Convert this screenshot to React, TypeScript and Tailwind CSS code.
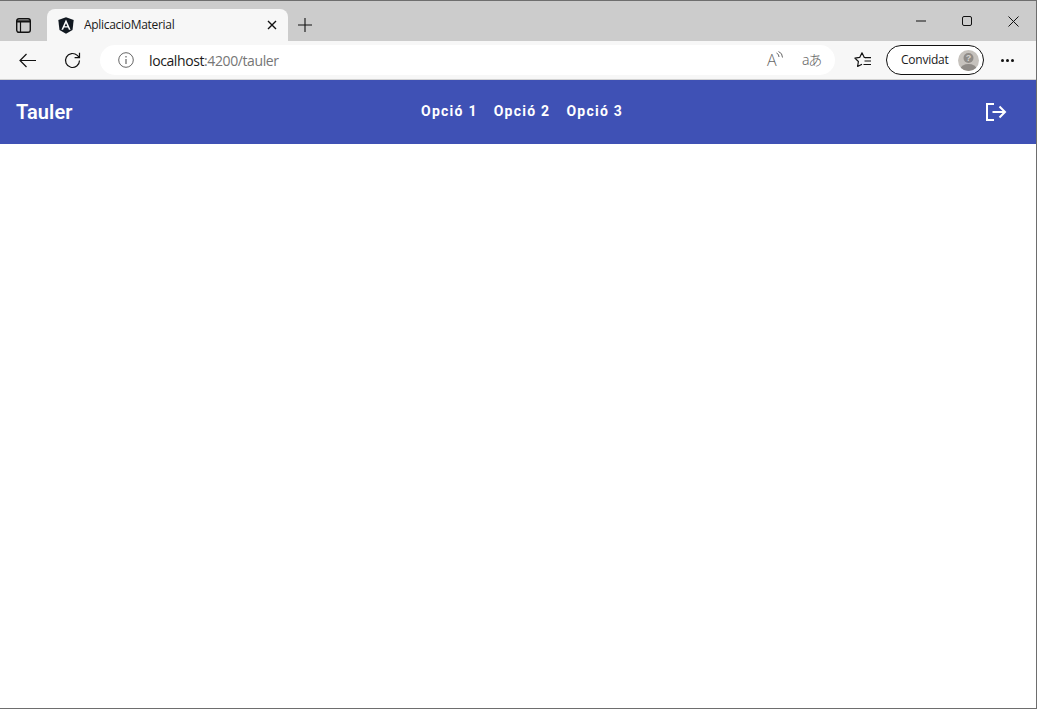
export default function App() {
  const ui = { fontFamily: '"Segoe UI", "Open Sans", "Noto Sans", sans-serif' };
  const roboto = { fontFamily: 'Roboto, sans-serif' };
  return (
    <div className="h-[709px] w-full overflow-hidden flex flex-col bg-white border-t border-r border-b border-[#6e6e6e]">
      {/* tab strip */}
      <div className="h-[40px] shrink-0 bg-[#cccccc] flex items-end" style={ui}>
        <div className="w-[47px] h-[32px] flex items-center justify-center">
          <svg width="15" height="15" viewBox="0 0 15 15" fill="none" stroke="#111" strokeWidth="1.4">
            <rect x="0.7" y="0.7" width="13.600" height="13.600" rx="2.200" />
            <path d="M0.7 3.400h13.600" strokeWidth="2.200" />
            <path d="M4.500 4v10" strokeWidth="1.200" />
          </svg>
        </div>
        <div className="w-[241px] h-[32px] bg-[#f7f7f7] rounded-t-lg flex items-center pl-[11px] pr-[10px]">
          <svg width="16" height="17" viewBox="0 0 16 17" className="shrink-0">
            <path d="M8 0.3 L15.7 3 L14.5 13 L8 16.7 L1.500 13 L0.300 3 Z" fill="#111820" />
            <path d="M8 2.600 L3.400 12.800 H5.100 L6 10.500 H10 L10.900 12.800 H12.600 Z M8 6.200 L9.400 9.200 H6.600 Z" fill="#ffffff" fillRule="evenodd" />
          </svg>
          <span className="ml-[10px] text-[12px] tracking-[-0.3px] text-[#1a1a1a] flex-1 truncate">AplicacioMaterial</span>
          <svg width="10" height="10" viewBox="0 0 10 10" stroke="#111" strokeWidth="1.400" className="mr-[1px]">
            <path d="M1 1l8 8M9 1l-8 8" />
          </svg>
        </div>
        <div className="w-[34px] h-[32px] flex items-center justify-center">
          <svg width="14" height="14" viewBox="0 0 14 14" stroke="#111" strokeWidth="1.100">
            <path d="M7 0v14M0 7h14" />
          </svg>
        </div>
        <div className="ml-auto h-[40px] flex items-center">
          <div className="w-[46px] flex justify-center">
            <svg width="10" height="10" viewBox="0 0 10 10" stroke="#111" strokeWidth="1"><path d="M0 5h10" /></svg>
          </div>
          <div className="w-[46px] flex justify-center">
            <svg width="10" height="10" viewBox="0 0 10 10" stroke="#111" strokeWidth="1" fill="none"><rect x="0.500" y="0.500" width="9" height="9" rx="1.500" /></svg>
          </div>
          <div className="w-[46px] flex justify-center">
            <svg width="11" height="11" viewBox="0 0 11 11" stroke="#111" strokeWidth="1"><path d="M0.500 0.500l10 10M10.500 0.500l-10 10" /></svg>
          </div>
        </div>
      </div>
      {/* toolbar */}
      <div className="h-[39px] shrink-0 bg-[#f7f7f7] border-b border-[#d2d2d2] flex items-center" style={ui}>
        <div className="w-[55px] flex justify-center">
          <svg width="17" height="15" viewBox="0 0 17 15" fill="none" stroke="#111" strokeWidth="1.200">
            <path d="M17 7.500H1M7.500 1 1 7.500 7.500 14" />
          </svg>
        </div>
        <div className="w-[34px] flex justify-center">
          <svg width="17" height="17" viewBox="0 0 17 17" fill="none" stroke="#111" strokeWidth="1.200">
            <path d="M15.500 8.500a7 7 0 1 1-2.200-5.100L15.500 5.500" />
            <path d="M15.500 0.800v4.900h-4.900" />
          </svg>
        </div>
        <div className="ml-[11px] w-[735px] h-[30px] rounded-full bg-white flex items-center pl-[18px]">
          <svg width="16" height="16" viewBox="0 0 16 16" fill="none" stroke="#666" strokeWidth="1">
            <circle cx="8" cy="8" r="7.300" />
            <path d="M8 7v5M8 4v1.400" strokeWidth="1.200" />
          </svg>
          <span className="ml-[15px] text-[14px] tracking-[-0.4px] text-[#1a1a1a]">localhost<span className="text-[#767676]">:4200/tauler</span></span>
          <div className="ml-auto flex items-center mr-[14px]">
            <span className="text-[16px] font-light text-[#666] leading-none w-[35px] relative">
              A<svg width="8" height="8" viewBox="0 0 8 8" fill="none" stroke="#666" strokeWidth="1" className="absolute left-[9px] top-[-1px]"><path d="M0.500 2q2.500 1 2.500 4M2.500 0.500q4 1.500 4 6" /></svg>
            </span>
            <span className="text-[14px] font-light text-[#666] leading-none tracking-[-1.300px]" style={{ fontFamily: '"Noto Sans", "Noto Sans CJK JP", sans-serif' }}>aあ</span>
          </div>
        </div>
        <div className="ml-[19px] w-[17px] flex justify-center">
          <svg width="17" height="17" viewBox="0 0 17 17" fill="none" stroke="#111" strokeWidth="1.200">
            <path d="M11.500 5.600 10.300 5.400 8 0.800 5.700 5.400.9 6.100l3.500 3.400-.8 5 4.400-2.300" strokeLinejoin="round" />
            <path d="M11 5.600h6M10.500 9h6.500M9.500 12.500H17" />
          </svg>
        </div>
        <div className="ml-[15px] w-[98px] h-[30px] rounded-full border border-[#111] bg-white flex items-center pl-[14px]">
          <span className="text-[12px] tracking-[-0.25px] text-[#1a1a1a]">Convidat</span>
          <div className="ml-auto mr-[4px] w-[21px] h-[21px] rounded-full bg-[#c6c2bd] overflow-hidden relative flex justify-center">
            <svg width="21" height="21" viewBox="0 0 21 21">
              <circle cx="10.500" cy="8" r="5" fill="#8f8b87" />
              <ellipse cx="10.500" cy="19" rx="8" ry="5" fill="#8f8b87" />
              <text x="10.500" y="11" textAnchor="middle" fontSize="9" fontWeight="700" fill="#d6d3cf" fontFamily="Liberation Sans, sans-serif">?</text>
            </svg>
          </div>
        </div>
        <div className="ml-[17px] flex gap-[2px]">
          <span className="w-[3px] h-[3px] rounded-full bg-[#111]" />
          <span className="w-[3px] h-[3px] rounded-full bg-[#111]" />
          <span className="w-[3px] h-[3px] rounded-full bg-[#111]" />
        </div>
      </div>
      {/* app toolbar */}
      <header className="h-[64px] shrink-0 bg-[#3f51b5] flex items-center px-[16px] text-white" style={roboto}>
        <span className="text-[20px] font-semibold tracking-[0.1px] leading-[32px] w-[57px]">Tauler</span>
        <nav className="ml-[348px] flex gap-[16px] text-[14px] font-bold tracking-[1.250px] leading-[36px] -mt-[2px]">
          <span>Opció 1</span>
          <span>Opció 2</span>
          <span>Opció 3</span>
        </nav>
        <div className="ml-auto mr-[13px] -mt-[1px]">
          <svg width="22" height="20" viewBox="0 0 22 20" fill="none" stroke="#fff" strokeWidth="2">
            <path d="M9 2H2v16h7" />
            <path d="M7.500 10H20M14.500 4.500 20 10l-5.500 5.500" />
          </svg>
        </div>
      </header>
      <main className="flex-1 bg-white" />
    </div>
  );
}
